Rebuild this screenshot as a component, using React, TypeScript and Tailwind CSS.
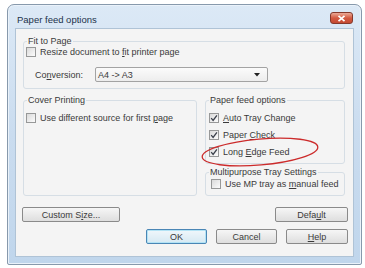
import React from "react";

function Check({ checked }: { checked?: boolean }) {
  return (
    <span className="w-[10px] h-[10px] border border-[#979898] bg-[#f7f7f7] flex items-center justify-center shrink-0">
      <span className="w-[8px] h-[8px] bg-gradient-to-br from-[#dadada] to-[#fcfcfc] flex items-center justify-center">
        {checked && (
          <svg width="8" height="8" viewBox="0 0 8 8">
            <path d="M1.2 4.2 L3.1 6.4 L6.9 1.3" fill="none" stroke="#3a3f4a" strokeWidth="1.3" />
          </svg>
        )}
      </span>
    </span>
  );
}

function Row({ checked, children }: { checked?: boolean; children: React.ReactNode }) {
  return (
    <div className="flex items-center gap-[4px] h-[10px]">
      <Check checked={checked} />
      <span className="text-[9px] leading-[12px] whitespace-nowrap">{children}</span>
    </div>
  );
}

function Group({
  title,
  className,
  children,
}: {
  title: string;
  className: string;
  children?: React.ReactNode;
}) {
  return (
    <div className={`relative border border-[#d6dee5] rounded-[3px] ${className}`}>
      <span className="absolute left-[3px] top-[-7px] px-[1px] bg-[#f4f4f4] text-[9px] leading-[12px] whitespace-nowrap">
        {title}
      </span>
      {children}
    </div>
  );
}

function Btn({
  children,
  className,
  isDefault,
}: {
  children: React.ReactNode;
  className: string;
  isDefault?: boolean;
}) {
  return (
    <div
      className={`h-[15px] rounded-[2px] border flex items-center justify-center text-[9px] leading-[12px] ${
        isDefault
          ? "border-[#4a86b5] shadow-[inset_0_0_0_1px_#b3e3f5] bg-gradient-to-b from-[#f0f7fb] to-[#d6e9f3]"
          : "border-[#8a8a8a] bg-gradient-to-b from-[#f6f6f6] to-[#dedede]"
      } ${className}`}
    >
      {children}
    </div>
  );
}

export default function App() {
  return (
    <div className="relative w-[365px] h-[268px] bg-white overflow-hidden font-['Liberation_Sans',Arial,sans-serif] text-[#3a3a3a]">
      <div className="ml-[7px] mt-[4px] w-[355px] h-[261px] border border-[#8799ac] rounded-t-[7px] rounded-b-[2px] bg-gradient-to-b from-[#dce9f6] via-[#cadcef] to-[#c0d6ec] flex flex-col px-[7px] pb-[7px] shadow-[inset_0_0_0_1px_#eaf2fa]">
        <div className="h-[23px] flex justify-between items-start shrink-0">
          <span className="pt-[9px] ml-[2px] text-[9.5px] leading-[12px] text-[#22324a]">Paper feed options</span>
          <div className="mt-[7px] mr-[1px] w-[23px] h-[12px] rounded-[3px] border border-[#84392c] bg-gradient-to-b from-[#eaa997] via-[#d35a42] to-[#c44a32] flex items-center justify-center">
            <svg width="9" height="7" viewBox="0 0 9 7">
              <path d="M1.5 0.8 L7.5 6.2 M7.5 0.8 L1.5 6.2" stroke="#ffffff" strokeWidth="1.7" />
            </svg>
          </div>
        </div>
        <div className="flex-1 border border-[#afc3d6] bg-[#f4f4f4] flex flex-col">
          <Group title="Fit to Page" className="ml-[7px] mt-[12px] w-[322px] h-[48px] pt-[5px] pl-[2px]">
            <Row>
              Resize document to <u>f</u>it printer page
            </Row>
            <div className="mt-[10px] flex items-center">
              <span className="ml-[9px] w-[60px] text-[9px] leading-[12px]">
                Co<u>n</u>version:
              </span>
              <div className="w-[173px] h-[15px] border border-[#a3a3a3] rounded-[2px] bg-gradient-to-b from-[#fbfbfb] to-[#ededed] flex items-center justify-between pl-[2px] pr-[7px]">
                <span className="text-[9px] leading-[12px]">A4 -&gt; A3</span>
                <svg width="6" height="4" viewBox="0 0 6 4">
                  <path d="M0 0 L6 0 L3 3.5 Z" fill="#222" />
                </svg>
              </div>
            </div>
          </Group>

          <div className="mt-[11px] ml-[7px] flex gap-[8px]">
            <Group title="Cover Printing" className="w-[174px] h-[96px] pt-[12px] pl-[2px]">
              <Row>
                Use different source for first <u>p</u>age
              </Row>
            </Group>
            <div className="w-[140px] flex flex-col gap-[8px]">
              <Group title="Paper feed options" className="h-[64px] pt-[12px] pl-[3px] flex flex-col gap-[7px]">
                <Row checked>
                  <u>A</u>uto Tray Change
                </Row>
                <Row checked>
                  Paper <u>C</u>heck
                </Row>
                <Row checked>
                  Long <u>E</u>dge Feed
                </Row>
              </Group>
              <Group title="Multipurpose Tray Settings" className="h-[24px] pt-[6px] pl-[5px]">
                <Row>
                  Use MP tray as <u>m</u>anual feed
                </Row>
              </Group>
            </div>
          </div>

          <div className="mt-[11px] flex justify-between">
            <Btn className="ml-[6px] w-[98px]">
              Custom S<u>i</u>ze...
            </Btn>
            <Btn className="mr-[5px] w-[73px]">
              Defa<u>u</u>lt
            </Btn>
          </div>
          <div className="mt-[7px] flex justify-end gap-[9px] mr-[5px]">
            <Btn className="w-[61px]" isDefault>
              OK
            </Btn>
            <Btn className="w-[61px]">Cancel</Btn>
            <Btn className="w-[62px]">
              <u>H</u>elp
            </Btn>
          </div>
        </div>
      </div>
      <svg className="absolute left-0 top-0 pointer-events-none" width="365" height="268">
        <ellipse
          cx="260"
          cy="152"
          rx="58"
          ry="13"
          transform="rotate(-5 260 152)"
          fill="none"
          stroke="#cc2b2b"
          strokeWidth="1.3"
        />
      </svg>
    </div>
  );
}
